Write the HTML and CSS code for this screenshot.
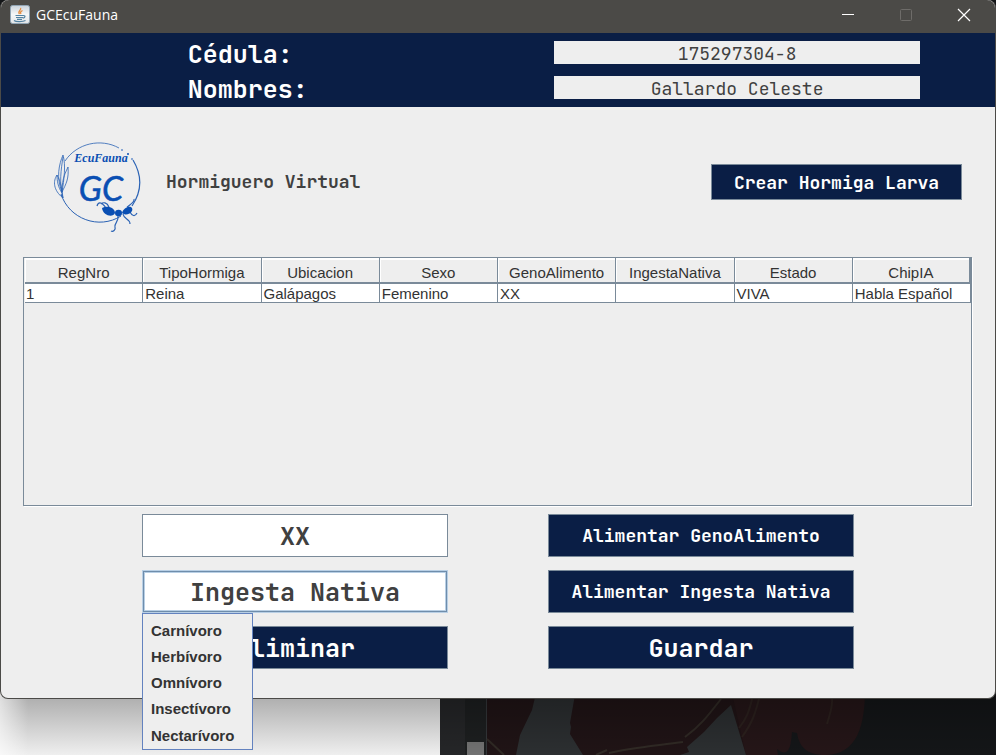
FILE: index.html
```html
<!DOCTYPE html>
<html lang="es">
<head>
<meta charset="utf-8">
<meta name="viewport" content="width=device-width, initial-scale=1">
<title>GCEcuFauna</title>
<link rel="stylesheet" href="styles.css">
</head>
<body>
<div class="window">
  <header class="titlebar">
    <svg class="app-icon" viewBox="0 0 20 20" aria-hidden="true">
      <defs><linearGradient id="tile" x1="0" y1="0" x2="0" y2="1"><stop offset="0" stop-color="#c9d3dc"/><stop offset=".5" stop-color="#f6f7f8"/><stop offset="1" stop-color="#e2e5e8"/></linearGradient></defs>
      <rect x=".5" y=".5" width="19" height="18" rx="2" fill="url(#tile)" stroke="#91a5b5"/>
      <path d="M10.500 3c1.500 2-3.500 3-1 6M12.500 5.500c-2 1-2.500 2-1.500 3.500" fill="none" stroke="#e58a3c" stroke-width="1.300"/>
      <path d="M5.500 10.500h8M6 12.500h7M7 14.300h5M13.500 10.500c2.500 0 1.500 2.500-.8 2.700M4 15.500c2 1.500 9 1.300 11.500 0" fill="none" stroke="#5382a1" stroke-width="1.200"/>
    </svg>
    <span class="title">GCEcuFauna</span>
    <button class="caption" type="button" aria-label="Minimizar"><svg viewBox="0 0 14 14"><path d="M1 6.500h12" stroke="#fff"/></svg></button>
    <button class="caption" type="button" aria-label="Maximizar" disabled><svg viewBox="0 0 14 14"><rect x="1.500" y="1.500" width="11" height="11" rx="1" fill="none" stroke="#6e6c69"/></svg></button>
    <button class="caption" type="button" aria-label="Cerrar"><svg viewBox="0 0 14 14"><path d="M1 1l12 12M13 1L1 13" stroke="#fff" stroke-width="1.200"/></svg></button>
  </header>

  <section class="student">
    <label for="cedula">Cédula:</label>
    <input id="cedula" type="text" value="175297304-8" readonly>
    <label for="nombres">Nombres:</label>
    <input id="nombres" type="text" value="Gallardo Celeste" readonly>
  </section>

  <main>
    <section class="intro">
      <svg class="logo" viewBox="0 0 90 94" role="img" aria-label="EcuFauna GC">
        <g fill="none" stroke="#2a62b4" stroke-width=".8">
          <path d="M12 21C24 3 48-2 66 8"/>
          <path d="M80 20c9 15 9 31-1 46" stroke-width="1.200"/>
          <path d="M8 54c8 25 38 36 60 22" stroke-width="1"/>
          <path d="M10 58C0 50 0 41 4 35c4 7 5 15 6 23zM9 52C3 38 6 24 10 15c3 10 1 25-1 37zM9 52c0-15 4-20 6-25 1 12-2 17-6 25zM10 58C6 43 8 30 10 17M9 53c-4-6-5-12-5-18"/>
          <path d="M53 68c-5-7-8-6-9-2M56 67c-2-5-6-5-8-3M65 76c1 6-4 7-3 11 1 3-2 5-4 4M70 74c1 6 7 4 7 10M77 72c2 4 5 5 7 1M74 67c4-3 8-5 7-8" stroke-width="1.200"/>
        </g>
        <g fill="#0a4fb3">
          <circle cx="69" cy="10" r=".8"/><circle cx="75" cy="14" r="1"/><circle cx="79" cy="19" r=".8"/>
          <path d="M49 68c6-3 13 0 13 5-2 5-12 3-13-5z"/>
          <ellipse cx="65.500" cy="73" rx="3.500" ry="3.300"/>
          <path d="M69 73c1-5 8-8 10-5 2 4-5 9-10 5z"/>
        </g>
        <text class="logo-name" x="48" y="22">EcuFauna</text>
        <text class="logo-mark" x="48" y="61">GC</text>
      </svg>
      <h1>Hormiguero Virtual</h1>
      <button class="action create" type="button">Crear Hormiga Larva</button>
    </section>

    <div class="table-pane">
      <table>
        <thead>
          <tr><th>RegNro</th><th>TipoHormiga</th><th>Ubicacion</th><th>Sexo</th><th>GenoAlimento</th><th>IngestaNativa</th><th>Estado</th><th>ChipIA</th></tr>
        </thead>
        <tbody>
          <tr><td>1</td><td>Reina</td><td>Galápagos</td><td>Femenino</td><td>XX</td><td></td><td>VIVA</td><td>Habla Español</td></tr>
        </tbody>
      </table>
    </div>

    <section class="controls">
      <button class="choice" type="button">XX</button>
      <button class="action" type="button">Alimentar GenoAlimento</button>
      <div class="picker">
        <button class="choice focused" type="button" aria-haspopup="menu" aria-expanded="true">Ingesta Nativa</button>
        <div class="menu" role="menu">
          <button type="button" role="menuitem">Carnívoro</button>
          <button type="button" role="menuitem">Herbívoro</button>
          <button type="button" role="menuitem">Omnívoro</button>
          <button type="button" role="menuitem">Insectívoro</button>
          <button type="button" role="menuitem">Nectarívoro</button>
        </div>
      </div>
      <button class="action" type="button">Alimentar Ingesta Nativa</button>
      <button class="action large" type="button">Eliminar</button>
      <button class="action large" type="button">Guardar</button>
    </section>
  </main>
</div>

<div class="desktop" aria-hidden="true">
  <div class="page"></div>
  <svg class="artwork" viewBox="0 0 556 66" preserveAspectRatio="xMinYMax slice">
    <defs>
      <linearGradient id="shade" x1="0" y1="0" x2="0" y2="1"><stop offset="0" stop-color="#000" stop-opacity=".3"/><stop offset="1" stop-color="#000" stop-opacity="0"/></linearGradient>
    </defs>
    <rect width="556" height="66" fill="#141618"/>
    <path d="M47 0H425C425 35 418 66 385 66 365 66 359 56 357 44l-5-1c-1 14-3 27-15 17l1 6H47z" fill="#251618"/>
    <path d="M47 0H291L306 66H47z" fill="#201416"/>
    <rect width="25" height="66" fill="#252628"/>
    <rect x="25" width="21" height="66" fill="#1d1f20"/>
    <path d="M46.500 0v66" stroke="#34373a"/>
    <rect x="27" y="53" width="17" height="13" fill="#727272"/>
    <path d="M97 0L92 21 80 46 76 66h67L130 45l1-7-1-4 6-34zM291 16L277 29 264 43 247 58l2 5-9 3h66z" fill="#2c2f31"/>
    <g fill="none" stroke="#302a25" stroke-width="2">
      <path d="M281 10C267 28 260 37 245 48M243 53c-30 4-55 6-74 11M167 61l-11 5M47 50l17 16"/>
      <path d="M313 6c-4 18-7 24-14 33M320 6c-5 20-8 28-18 42M392 8c1 10-2 16-5 27" stroke="#2c211e"/>
    </g>
    <rect width="556" height="66" fill="url(#shade)"/>
  </svg>
</div>
</body>
</html>
```
FILE: styles.css
```css
:root {
  --navy: #0a1e45;
  --line: #7a8a99;
  --panel: #eee;
  --ink: #404040;
  --chrome: #4b4a47;
  --mono: "JetBrains Mono", "DejaVu Sans Mono", monospace;
  --sans: "Liberation Sans", Arial, sans-serif;
}

* { box-sizing: border-box; }

body {
  margin: 0;
  min-height: 100vh;
  display: flex;
  flex-direction: column;
  background: #141618;
  font-family: var(--sans);
}

button, input { font: inherit; margin: 0; }

.window {
  position: relative;
  z-index: 1;
  background: var(--panel);
  border: 1px solid var(--chrome);
  border-top: 0;
  border-radius: 8px;
}

.titlebar {
  display: flex;
  align-items: center;
  height: 33px;
  padding: 0 2px 4px 9px;
  background: var(--chrome);
  border-radius: 8px 8px 0 0;
}

.app-icon { width: 20px; height: 20px; margin-right: 6px; }

.title {
  flex: 1;
  color: #fff;
  font: 14px/20px "Open Sans", sans-serif;
}

.caption {
  width: 58px;
  height: 28px;
  padding: 0;
  border: 0;
  background: none;
}

.caption svg { display: block; width: 14px; height: 14px; margin: auto; }

.student {
  display: grid;
  grid-template-columns: 366fr 367fr;
  align-items: start;
  row-gap: 8px;
  padding: 8px 7.5% 4px 18.8%;
  background: var(--navy);
  font-family: var(--mono);
}

.student label {
  color: #fff;
  font-size: 25px;
  font-weight: bold;
  line-height: 27px;
}

.student input {
  width: 100%;
  height: 23px;
  padding: 1px 0 0;
  border: 0;
  background: var(--panel);
  color: var(--ink);
  font-size: 18px;
  text-align: center;
}

.intro {
  display: flex;
  align-items: center;
  height: 150px;
  padding: 0 33px 0 52px;
}

.logo { width: 90px; height: 94px; margin: 10px 23px 0 0; }

.logo text { fill: #0a4fb3; text-anchor: middle; }
.logo-name { font: italic bold 12px "Liberation Serif", serif; }
.logo-mark { font: italic 34px Lato, sans-serif; stroke: #0a4fb3; stroke-width: .5; }

h1 {
  flex: 1;
  margin: 0;
  color: var(--ink);
  font: bold 18px/24px var(--mono);
}

.action, .choice {
  width: 100%;
  padding: 0;
  border: 1px solid var(--line);
  font-family: var(--mono);
  font-weight: bold;
}

.action { background: var(--navy); color: #fff; font-size: 18px; }
.action.large { font-size: 25px; }
.create { width: 251px; height: 36px; }

.choice { background: #fff; color: var(--ink); font-size: 25px; }

.choice.focused {
  border-color: #6f8dab;
  box-shadow: 0 0 0 1px #b8cfe5, inset 0 0 0 1px #b8cfe5;
}

.table-pane {
  height: 249px;
  margin: 0 23px 0 22px;
  padding-left: 1px;
  border: 1px solid var(--line);
  box-shadow: 1px 1px 0 #fff;
}

table {
  width: 100%;
  table-layout: fixed;
  border-spacing: 0;
  color: #333;
  font-size: 15px;
  line-height: 17px;
}

th {
  height: 26px;
  padding: 4px 0 0;
  border: solid var(--line);
  border-width: 0 1px 2px 0;
  box-shadow: inset 1px 2px 0 #fff;
  font-weight: normal;
  text-align: center;
}

th:last-child { border-right-width: 2px; }

td {
  height: 19px;
  padding: 0 2px;
  border: solid var(--line);
  border-width: 0 1px 1px 0;
  background: #fff;
}

td:first-child { padding-left: 1px; }

.controls {
  display: grid;
  grid-template-columns: 1fr 1fr;
  grid-auto-rows: 43px;
  gap: 13px 100px;
  padding: 8px 141px 29px;
}

.picker { position: relative; display: flex; padding: 1px; }

.menu {
  position: absolute;
  top: 100%;
  left: 0;
  display: flex;
  flex-direction: column;
  width: 111px;
  padding: 2px 0 1px;
  border: 1px solid #6382bf;
  background: var(--panel);
}

.menu button {
  height: 26px;
  padding: 4px 8px 0;
  border: 0;
  background: none;
  color: #333;
  font-size: 15px;
  font-weight: bold;
  line-height: 18px;
  text-align: left;
}

.menu button:last-child { height: 28px; }

.desktop {
  flex: 1;
  display: flex;
  min-height: 66px;
  margin-top: -10px;
}

.page {
  width: 440px;
  background: linear-gradient(90deg, rgba(255, 255, 255, .6), rgba(255, 255, 255, 0) 28px), linear-gradient(#aaa, #b0b0b0 10px, #efefef);
}

.artwork { flex: 1; min-width: 0; height: 66px; }
```
